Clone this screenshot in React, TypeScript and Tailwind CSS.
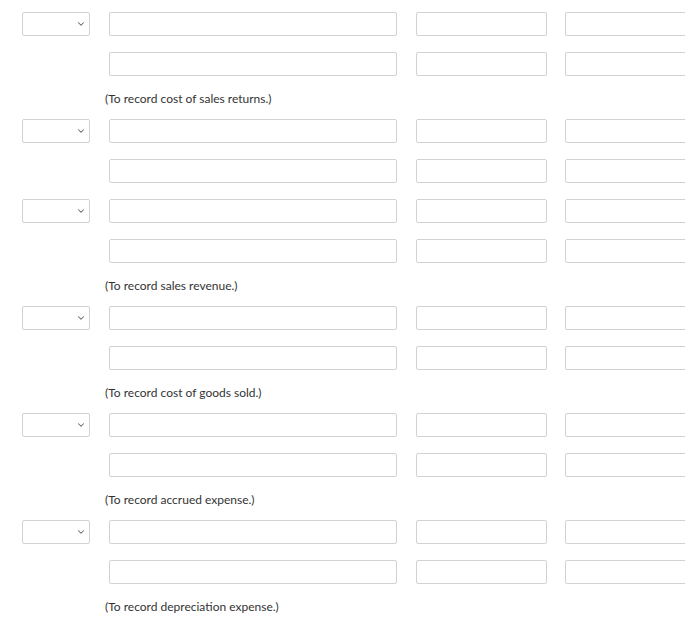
import { ChevronDown } from "lucide-react";

interface Entry {
    note?: string;
}

const entries: Entry[] = [
    { note: "(To record cost of sales returns.)" },
    {},
    { note: "(To record sales revenue.)" },
    { note: "(To record cost of goods sold.)" },
    { note: "(To record accrued expense.)" },
    { note: "(To record depreciation expense.)" },
];

const Box = ({ className }: { className: string }) => (
    <div className={`h-6 shrink-0 border border-[#d2d2d2] bg-white rounded-[2px] ${className}`}></div>
);

const Line = ({ withSelect }: { withSelect: boolean }) => (
    <div className="flex flex-row items-center">
        {withSelect ? (
            <div className="h-6 w-[68px] shrink-0 border border-[#d2d2d2] rounded-[2px] flex items-center justify-end pr-[3px]">
                <ChevronDown className="h-[10px] w-[10px] text-[#666]" strokeWidth={2.5} />
            </div>
        ) : (
            <div className="w-[68px] shrink-0"></div>
        )}
        <Box className="ml-[19px] w-[288px]" />
        <Box className="ml-[19px] w-[131px]" />
        <Box className="ml-[18px] w-[140px]" />
    </div>
);

export default function App() {
    return (
        <div
            className="w-[685px] overflow-hidden bg-white pl-[22px] pt-3 pb-4 text-[#333]"
            style={{ fontFamily: "Lato, 'Liberation Sans', sans-serif" }}
        >
            {entries.map((entry, index) => (
                <div key={index} className={`flex flex-col gap-4 ${entry.note ? "mb-3" : "mb-4"}`}>
                    <Line withSelect={true} />
                    <Line withSelect={false} />
                    {entry.note && (
                        <div className="-mt-px ml-[83px] text-[12px] leading-4">{entry.note}</div>
                    )}
                </div>
            ))}
        </div>
    );
}
